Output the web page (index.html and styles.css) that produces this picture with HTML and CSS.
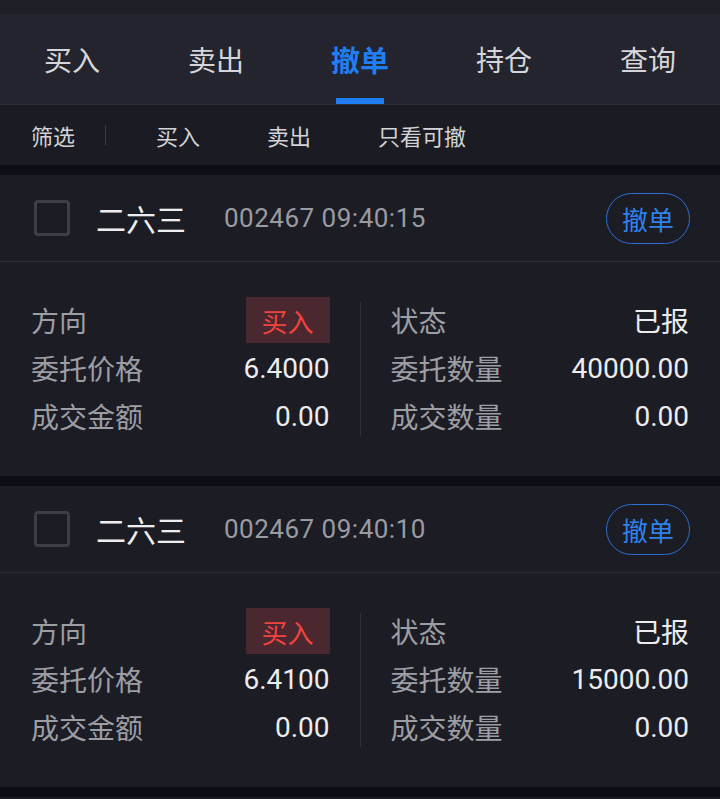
FILE: index.html
```html
<!DOCTYPE html>
<html lang="zh-CN">
<head>
    <meta charset="UTF-8">
    <meta name="viewport" content="width=device-width, initial-scale=1.0">
    <title>撤单</title>
    <link rel="stylesheet" href="styles.css">
</head>
<body>
    <div class="status-strip"></div>

    <!-- Main tabs -->
    <nav class="tabs">
        <div class="tab">买入</div>
        <div class="tab">卖出</div>
        <div class="tab active">撤单</div>
        <div class="tab">持仓</div>
        <div class="tab">查询</div>
    </nav>

    <!-- Filter bar -->
    <div class="filter-bar">
        <span class="filter-title">筛选</span>
        <span class="filter-sep"></span>
        <span class="filter-item">买入</span>
        <span class="filter-item">卖出</span>
        <span class="filter-item">只看可撤</span>
    </div>

    <div class="order-list">
        <div class="order-card">
            <div class="order-head">
                <span class="checkbox"></span>
                <span class="stock-name">二六三</span>
                <span class="stock-code">002467 09:40:15</span>
                <button class="cancel-btn">撤单</button>
            </div>
            <div class="order-body">
                <div class="col">
                    <div class="row"><span class="label">方向</span><span class="badge-buy">买入</span></div>
                    <div class="row"><span class="label">委托价格</span><span class="value">6.4000</span></div>
                    <div class="row"><span class="label">成交金额</span><span class="value">0.00</span></div>
                </div>
                <div class="col-sep"></div>
                <div class="col">
                    <div class="row"><span class="label">状态</span><span class="value">已报</span></div>
                    <div class="row"><span class="label">委托数量</span><span class="value">40000.00</span></div>
                    <div class="row"><span class="label">成交数量</span><span class="value">0.00</span></div>
                </div>
            </div>
        </div>

        <div class="order-card">
            <div class="order-head">
                <span class="checkbox"></span>
                <span class="stock-name">二六三</span>
                <span class="stock-code">002467 09:40:10</span>
                <button class="cancel-btn">撤单</button>
            </div>
            <div class="order-body">
                <div class="col">
                    <div class="row"><span class="label">方向</span><span class="badge-buy">买入</span></div>
                    <div class="row"><span class="label">委托价格</span><span class="value">6.4100</span></div>
                    <div class="row"><span class="label">成交金额</span><span class="value">0.00</span></div>
                </div>
                <div class="col-sep"></div>
                <div class="col">
                    <div class="row"><span class="label">状态</span><span class="value">已报</span></div>
                    <div class="row"><span class="label">委托数量</span><span class="value">15000.00</span></div>
                    <div class="row"><span class="label">成交数量</span><span class="value">0.00</span></div>
                </div>
            </div>
        </div>

        <div class="order-card"></div>
    </div>
</body>
</html>
```

FILE: styles.css
```css
body {
    font-family: Roboto, "Noto Sans CJK SC", sans-serif;
    background-color: #0d0e15;
    margin: 0;
    height: 799px;
    overflow: hidden;
}

.status-strip {
    height: 14px;
    background: #1e1f27;
}

.tabs {
    display: grid;
    grid-template-columns: repeat(5, 1fr);
    height: 90px;
    background: #23242e;
    border-bottom: 1px solid #2c2d37;
}

.tab {
    display: flex;
    align-items: center;
    justify-content: center;
    position: relative;
    font-size: 28px;
    color: #d6d6da;
}

.tab.active {
    color: #1f7ff2;
    font-weight: bold;
    font-size: 29px;
}

.tab.active::after {
    content: "";
    position: absolute;
    bottom: 0;
    left: 50%;
    width: 48px;
    height: 6px;
    margin-left: -24px;
    background: #1f7ff2;
}

.filter-bar {
    display: flex;
    align-items: center;
    height: 60px;
    padding-left: 31px;
    background: #1b1c23;
    font-size: 22px;
    color: #d2d3d7;
}

.filter-sep {
    width: 1px;
    height: 20px;
    margin: 0 50px 0 30px;
    background: #3a3b43;
}

.filter-item {
    margin-right: 67px;
}

.order-list {
    display: flex;
    flex-direction: column;
    gap: 10px;
    padding-top: 10px;
}

.order-card {
    background: #1b1c24;
    min-height: 20px;
}

.order-head {
    display: flex;
    align-items: center;
    height: 86px;
    padding: 0 30px 0 34px;
    border-bottom: 1px solid #2c2d35;
}

.checkbox {
    width: 30px;
    height: 30px;
    border: 3px solid #3d3e46;
    border-radius: 4px;
    margin-right: 26px;
}

.stock-name {
    font-size: 30px;
    color: #eeeef0;
    margin-right: 38px;
}

.stock-code {
    font-size: 26px;
    letter-spacing: 0.5px;
    color: #9a9ba1;
    flex: 1;
}

.cancel-btn {
    width: 84px;
    height: 51px;
    border: 1.5px solid #2b6fd3;
    border-radius: 26px;
    background: transparent;
    color: #2f82ee;
    font-family: inherit;
    font-size: 26px;
    padding: 0;
}

.order-body {
    display: grid;
    grid-template-columns: 1fr 1px 1fr;
    column-gap: 30px;
    padding: 34px 31px 36px;
}

.col-sep {
    background: #30313a;
    margin: 6px 0 4px;
}

.row {
    display: flex;
    align-items: center;
    justify-content: space-between;
    height: 48px;
    font-size: 28px;
}

.label {
    color: #9d9ea4;
}

.value {
    color: #ececee;
}

.badge-buy {
    display: flex;
    align-items: center;
    justify-content: center;
    width: 84px;
    height: 46px;
    background: #4b2730;
    color: #f0443c;
    font-size: 26px;
}
```
